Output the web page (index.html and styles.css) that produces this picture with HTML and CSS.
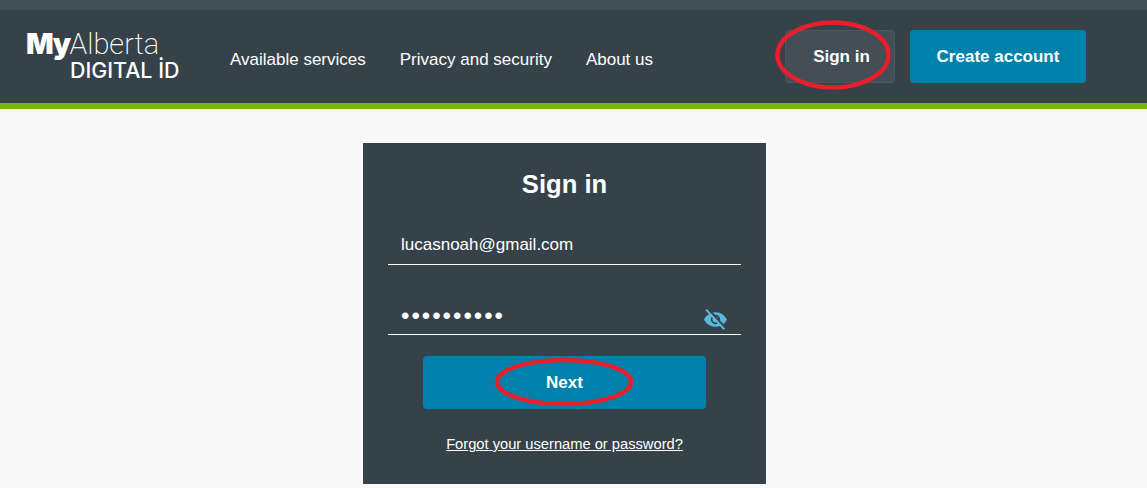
FILE: index.html
```html
<!DOCTYPE html>
<html lang="en">

<head>
  <meta charset="UTF-8">
  <meta name="viewport" content="width=device-width, initial-scale=1.0">
  <title>MyAlberta Digital ID</title>
  <link rel="stylesheet" href="styles.css">
</head>

<body>
  <div class="top-strip"></div>
  <header class="site-header">
    <a class="logo" href="#">
      <span class="logo-top"><b>My</b>Alberta</span>
      <span class="logo-bottom">DIGITAL İD</span>
    </a>
    <nav class="main-nav">
      <a href="#">Available services</a>
      <a href="#">Privacy and security</a>
      <a href="#">About us</a>
    </nav>
    <div class="header-actions">
      <a class="btn btn-ghost" href="#">
        Sign in
        <svg class="circle circle-signin" viewBox="0 0 116 70" aria-hidden="true">
          <ellipse cx="58" cy="35" rx="55.5" ry="32.5" />
        </svg>
      </a>
      <a class="btn btn-primary" href="#">Create account</a>
    </div>
  </header>

  <main class="page">
    <form class="signin-card">
      <h1>Sign in</h1>
      <div class="field">
        <input type="text" value="lucasnoah@gmail.com">
      </div>
      <div class="field field-password">
        <input type="password" value="••••••••••">
        <svg class="eye" viewBox="0 0 24 24" aria-hidden="true">
          <path d="M12 5C7 5 3 8 1 12c2 4 6 7 11 7s9-3 11-7c-2-4-6-7-11-7zm0 11.5a4.5 4.5 0 1 1 0-9 4.5 4.5 0 0 1 0 9z" />
          <circle cx="12" cy="12" r="2.8" />
          <path class="eye-gap" d="M4.5 1.5 22 20.5" />
          <path class="eye-slash" d="M3 2.5 20.5 21.5" />
        </svg>
      </div>
      <button type="button" class="btn btn-primary btn-next">
        Next
        <svg class="circle circle-next" viewBox="0 0 140 50" aria-hidden="true">
          <ellipse cx="70" cy="25" rx="67" ry="22" />
        </svg>
      </button>
      <a class="forgot" href="#">Forgot your username or password?</a>
    </form>
  </main>
</body>

</html>
```

FILE: styles.css
```css
:root {
  --dark: #36424a;
  --blue: #0081ab;
}

*,*::before,*::after { box-sizing: border-box; }

body {
  margin: 0;
  height: 488px;
  overflow: hidden;
  background: #f9f9f9;
  font-family: "Liberation Sans", Arial, sans-serif;
  color: #fff;
}

a { color: #fff; text-decoration: none; }

.top-strip {
  height: 10px;
  background: #424f57;
}

.site-header {
  height: 99px;
  display: flex;
  align-items: flex-start;
  background: var(--dark);
  border-bottom: 6px solid #77b50f;
}

.logo {
  width: 204px;
  margin-left: 26px;
  padding-top: 21px;
  display: flex;
  flex-direction: column;
}

.logo-top {
  font-family: Roboto, "Liberation Sans", sans-serif;
  font-size: 29px;
  line-height: 26px;
  font-weight: 200;
  white-space: nowrap;
}

.logo-top b {
  font-family: Inter, "Liberation Sans", sans-serif;
  font-size: 29px;
  font-weight: 900;
  letter-spacing: -1.5px;
}

.logo-bottom {
  margin-left: 44px;
  font-family: Inter, "Liberation Sans", sans-serif;
  font-size: 21.4px;
  font-weight: 500;
  line-height: 26px;
  white-space: nowrap;
}

.main-nav {
  display: flex;
  gap: 34px;
  padding-top: 40px;
  font-size: 17px;
  line-height: 19px;
}

.header-actions {
  margin-left: auto;
  margin-right: 61px;
  margin-top: 20px;
  display: flex;
  gap: 15px;
}

.btn {
  position: relative;
  display: flex;
  align-items: center;
  justify-content: center;
  height: 53px;
  border: none;
  border-radius: 4px;
  font-family: inherit;
  font-size: 17px;
  font-weight: 700;
  color: #fff;
}

.btn-ghost {
  width: 110px;
  padding-left: 3px;
  background: #434e56;
  border: 1px solid #4c575e;
}

.btn-primary { background: var(--blue); }

.header-actions .btn-primary { width: 176px; }

.circle {
  position: absolute;
  fill: none;
  stroke: #e3202c;
  stroke-width: 4.5;
  overflow: visible;
}

.circle-signin {
  left: -11px;
  top: -11px;
  width: 116px;
  height: 70px;
}

.circle-next {
  left: 71px;
  top: 1px;
  width: 140px;
  height: 50px;
}

.page {
  display: flex;
  justify-content: center;
  padding-top: 34px;
  padding-right: 18px;
}

.signin-card {
  width: 403px;
  height: 341px;
  padding: 25px 25px 0;
  display: flex;
  flex-direction: column;
  background: var(--dark);
}

.signin-card h1 {
  margin: 0 0 21px;
  text-align: center;
  font-size: 25.6px;
  line-height: 32px;
}

.field {
  position: relative;
  height: 44px;
  border-bottom: 1px solid #fff;
}

.field-password {
  margin-top: 26px;
}

.field input {
  width: 100%;
  height: 100%;
  padding: 4px 13px 0;
  border: none;
  outline: none;
  background: transparent;
  color: #fff;
  font-family: inherit;
  font-size: 17px;
}

.field input[type="password"] {
  padding: 7px 13px 0;
  font-size: 24px;
  letter-spacing: 2px;
}

.eye {
  position: absolute;
  right: 13px;
  top: 16px;
  width: 25px;
  height: 25px;
  fill: #5ab9db;
}

.eye-gap {
  fill: none;
  stroke: var(--dark);
  stroke-width: 2;
}

.eye-slash {
  fill: none;
  stroke: #5ab9db;
  stroke-width: 2;
}

.btn-next {
  width: 283px;
  margin: 21px auto 0;
}

.forgot {
  margin-top: 27px;
  text-align: center;
  font-size: 14.7px;
  line-height: 17px;
  text-decoration: underline;
}
```
